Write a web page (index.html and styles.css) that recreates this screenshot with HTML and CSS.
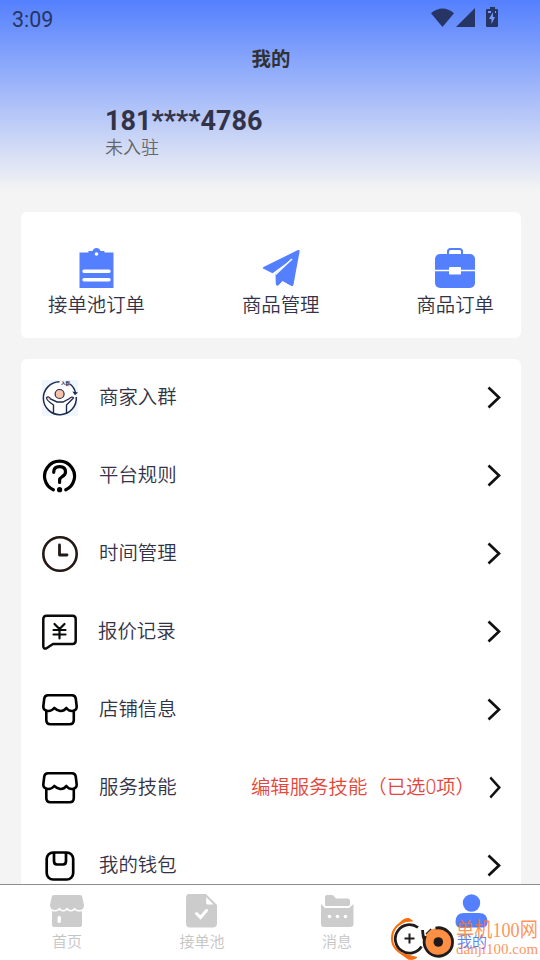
FILE: index.html
```html
<!DOCTYPE html>
<html lang="zh-CN">
<head>
<meta charset="utf-8">
<title>我的</title>
<link rel="stylesheet" href="styles.css">
</head>
<body>
<svg width="0" height="0" class="defs">
  <symbol id="chevron" viewBox="0 0 14 24" preserveAspectRatio="none"><path d="M1.500 1.500 12 11.500 1.500 21.500" fill="none" stroke="#111" stroke-width="2.700"/></symbol>
  <symbol id="shop" viewBox="0 0 36 36"><g fill="none" stroke="#000" stroke-width="2.600" stroke-linejoin="round"><path d="M6 3.300H30Q33.500 3.300 33.800 7L34.700 14.500Q34.700 18.300 30.500 19 27 19.300 24.300 16 22 19.300 18.200 19 15 18.500 12.300 16 9.500 19.300 5.800 19 1.300 18.300 1.300 14.500L2.200 7Q2.500 3.300 6 3.300Z"/><path d="M4.300 19V28Q4.300 32.300 8.600 32.300H27.500Q31.800 32.300 31.800 28V19"/></g></symbol>
</svg>
<header class="hero">
  <div class="status">
    <span class="clock">3:09</span>
    <svg width="68" height="22" viewBox="0 0 68 22" fill="#263563">
      <path d="M0 6.200Q11.500-3 23 6.200L11.500 20Z"/><path d="M44 1V20H25Z"/>
      <path d="M59 0h5v2h2q1 0 1 1v16q0 1-1 1H56q-1 0-1-1V3q0-1 1-1h3z"/>
      <path d="M57 4h3v2h-3zM64 4h1v2h-1zM62 5 58 12H60.500V17L64 10H61.800Z" fill="#7798ff"/>
    </svg>
  </div>
  <h1 class="title">我的</h1>
  <div class="phone">181****4786</div>
  <div class="state">未入驻</div>
</header>
<main class="content">
  <section class="card shortcuts">
    <a class="shortcut"><svg width="40" height="40" viewBox="-0.500 0 40 40"><path d="M3 4.500H12V3H16Q17 0 20 0T24 3H28V4.500H37V40H3Z" fill="#5480ff"/><circle cx="20" cy="6" r="1.800" fill="#fff"/><path d="M7.500 23.300H32.500M7.500 31.700H32.500" stroke="#fff" stroke-width="3.400" stroke-linecap="round"/></svg><span>接单池订单</span></a>
    <a class="shortcut"><svg width="40" height="40" viewBox="0 0 40 40" fill="#5480ff"><path d="M2 20.500Q1.500 19.500 3 18.800L37 2Q39 1.500 38.500 4L32.500 36.500Q32 38.800 30 37.800L21.500 33 18 36.800Q15.500 38.800 14.800 36L14.500 25.500 31 11 11.500 25.200Z"/><path d="M14.500 26.500 31 11" stroke="#fff" stroke-width="1.400"/></svg><span>商品管理</span></a>
    <a class="shortcut"><svg width="40" height="40" viewBox="0 0 40 40"><path d="M13 7V3.500Q13 1 15.500 1H24.500Q27 1 27 3.500V7" fill="none" stroke="#5480ff" stroke-width="2"/><rect y="6" width="40" height="34" rx="5" fill="#5480ff"/><path d="M0 22.500H40" stroke="#fff" stroke-width="1.500"/><rect x="14" y="19" width="12" height="7.500" rx="1" fill="#fff"/></svg><span>商品订单</span></a>
  </section>
  <section class="card menu">
    <a class="row"><svg class="ico" viewBox="0 0 36 36"><rect width="36" height="36" fill="#eff6fd"/><circle cx="18" cy="18" r="15.800" fill="#fff"/><path d="M17.500 1.700A16.500 16.500 0 1 0 34.300 17M28 4Q32.500 7.500 33.500 13" fill="none" stroke="#1c2b50" stroke-width="1.500"/><path d="M30.300 11.500 36 12.500 33 15.300Z" fill="#1c2b50"/><circle cx="17.600" cy="14" r="4.500" fill="#fac1a8" stroke="#1c2b50" stroke-width="1.200"/><path d="M4.500 17.500Q7 16 8.500 19L15 22H21L27.500 18.500Q30 16 31.500 18L24.500 25V33.500M4.500 17.500Q4 20 11.500 25V33.500" fill="none" stroke="#1c2b50" stroke-width="1.400"/><path d="M5 18l2-.5 1.500 3zM30.500 18l-2.500.5-1 2z" fill="#f5ab91"/><text class="mini" x="19" y="4.500">入群</text></svg><span class="label">商家入群</span><svg class="arrow"><use href="#chevron"/></svg></a>
    <a class="row"><svg class="ico" viewBox="0 0 36 36"><path d="M11.300 31.800A15 15 0 1 1 23.800 31.800" fill="none" stroke="#000" stroke-width="3.200" stroke-linecap="round"/><path d="M11.700 14.300Q11.700 8.700 17.600 8.700T23.500 14Q23.500 16.700 20.300 18.500 17.600 20.200 17.600 22V24.500" fill="none" stroke="#000" stroke-width="3.200" stroke-linecap="round"/><circle cx="17.600" cy="31.700" r="2.600"/></svg><span class="label">平台规则</span><svg class="arrow"><use href="#chevron"/></svg></a>
    <a class="row"><svg class="ico" viewBox="0 0 36 36" fill="none" stroke="#231815"><circle cx="18" cy="18" r="16.700" stroke-width="2.600"/><path d="M17.500 9V19H25" stroke-width="2.800" stroke-linecap="round" stroke-linejoin="round"/></svg><span class="label">时间管理</span><svg class="arrow"><use href="#chevron"/></svg></a>
    <a class="row quote"><svg class="ico" viewBox="0 0 36 36" fill="none" stroke="#090b0b" stroke-width="2.500" stroke-linecap="round" stroke-linejoin="round"><path d="M4.500 1.700H30.500Q33.700 1.700 33.700 5V26.800Q33.700 30 30.500 30H11L4.500 34.300Q1.300 35.500 1.300 32V5Q1.300 1.700 4.500 1.700Z"/><path d="M12.500 10 17.500 15 22.500 10M11.500 16H23.500M11.500 20.500H23.500M17.500 15V24.500" stroke-width="2.200"/></svg><span class="label">报价记录</span><svg class="arrow"><use href="#chevron"/></svg></a>
    <a class="row"><svg class="ico"><use href="#shop"/></svg><span class="label">店铺信息</span><svg class="arrow"><use href="#chevron"/></svg></a>
    <a class="row"><svg class="ico"><use href="#shop"/></svg><span class="label">服务技能</span><span class="hint">编辑服务技能（已选0项）</span><svg class="arrow narrow"><use href="#chevron"/></svg></a>
    <a class="row"><svg class="ico" viewBox="0 0 36 36" fill="none" stroke="#000" stroke-width="2.700"><rect x="4.700" y="4.500" width="26.500" height="27" rx="6.500"/><path d="M12 4.500V13Q12 16.500 15 16.500H21Q24 16.500 24 13V4.500"/></svg><span class="label">我的钱包</span><svg class="arrow"><use href="#chevron"/></svg></a>
  </section>
</main>
<nav class="tabs">
  <a class="tab"><svg width="36" height="36" viewBox="0 0 36 36" fill="#ccc"><path d="M5 2H31Q33 2 33.300 4L35 12Q35 17 30 17 27 17 25.500 14.500 22 19.500 18 14.500 14 19.500 10.500 14.500 9 17 6 17 1 17 1 12L2.700 4Q3 2 5 2Z"/><path d="M3 18Q7 19.500 10.500 17 14.500 20 18 17 21.500 20 25.500 17 29 19.500 33 18V32Q33 34 31 34H5Q3 34 3 32Z"/><rect x="8.500" y="23" width="3.500" height="7" rx="1.700" fill="#fff"/></svg><span>首页</span></a>
  <a class="tab"><svg width="36" height="36" viewBox="0 0 36 36"><path d="M5 1H22L33 12V30Q33 34.500 28.500 34.500H6Q2 34.500 2 30.500V5Q2 1 5 1Z" fill="#ccc"/><path d="M22.200 4V10Q22.200 11.500 24 11.500H29.500Z" fill="#fff"/><path d="M12.500 20.500 16.500 24.500 22.500 17.500" fill="none" stroke="#fff" stroke-width="3" stroke-linecap="round"/></svg><span>接单池</span></a>
  <a class="tab"><svg width="36" height="36" viewBox="0 0 36 36" fill="#ccc"><path d="M6 12V4Q6 2 8 2H13Q15 2 16 4.500L17 5.500H29Q31 5.500 31 8V11Q31 13 29 13H7Q6 13 6 12Z"/><path d="M2 11 6 15H30L34.500 11V31Q34.500 34 31 34H5Q2 34 2 31Z"/><g fill="#fff"><circle cx="10.500" cy="23.500" r="1.800"/><circle cx="18.500" cy="23.500" r="1.800"/><circle cx="26.500" cy="23.500" r="1.800"/></g></svg><span>消息</span></a>
  <a class="tab active"><svg width="36" height="36" viewBox="0 0 36 36" fill="#5480ff"><circle cx="17.500" cy="10" r="8.700"/><path d="M1.500 29Q1.500 20 10 20H25Q33.500 20 33.500 29 33.500 34.500 28 34.500H7Q1.500 34.500 1.500 29Z"/></svg><span>我的</span></a>
</nav>
<div class="watermark">
  <svg width="66" height="46" viewBox="0 0 66 46" fill="none">
    <path d="M18 5Q2 10 2 23.500 2 36 19 42" stroke="#ff6d0a" stroke-width="2"/><path d="M9 9Q13 3 19 3.500L22.500 6Q16 5.500 9 9ZM10 38 27 42.500Q23 45.500 18 44Z" fill="#ff6d0a" stroke="#ff6d0a"/>
    <circle cx="19.500" cy="23.500" r="14" fill="#fff"/>
    <path d="M28 12.500A14.200 14.200 0 1 0 31.500 31.500" stroke="#211b1c" stroke-width="2.800"/><path d="M19.500 18.500V28.500M14.500 23.500H24.500" stroke="#211b1c" stroke-width="2"/>
    <path d="M32.500 15Q32.500 22 35.500 28M36.500 19.500 41.500 14.500" stroke="#211b1c" stroke-width="2.800"/><circle cx="48.300" cy="27" r="14" fill="#ff9043"/><path d="M45.500 13.100A14.200 14.200 0 1 1 35.500 21" stroke="#211b1c" stroke-width="2.800"/><circle cx="48.300" cy="27" r="4.800" fill="#211b1c"/>
  </svg>
  <div class="brand"><div class="name">单机100网</div><div class="site">danji100.com</div></div>
</div>
</body>
</html>
```
FILE: styles.css
```css
* { box-sizing: border-box; }
body {
  margin: 0;
  width: 540px;
  height: 960px;
  overflow: hidden;
  display: flex;
  flex-direction: column;
  background: #f4f4f4;
  color: #333347;
  font-family: Roboto, "Noto Sans CJK SC", sans-serif;
}
svg { display: block; flex: none; }
.defs { position: absolute; }
.hero {
  height: 191px;
  flex: none;
  background: linear-gradient(#5480ff, #cbd6f6 73%, #f4f4f4);
}
.status {
  display: flex;
  justify-content: space-between;
  align-items: center;
  height: 36px;
  padding: 0 41px 0 12px;
}
.clock { font-size: 21.5px; color: #263563; padding-top: 2px; }
.title {
  margin: 8px 0 0;
  text-align: center;
  font-size: 19.4px;
  line-height: 31px;
  font-weight: 700;
  color: #303133;
  padding-left: 2px;
}
.phone {
  margin: 30px 0 0 105px;
  font-size: 27px;
  line-height: 32px;
  font-weight: 700;
}
.state {
  margin-left: 105px;
  font-size: 18px;
  line-height: 22px;
  color: #666;
  font-weight: 350;
}
.content {
  flex: 1;
  min-height: 0;
  overflow: hidden;
  padding: 21px 19px 0 21px;
}
.card { background: #fff; border-radius: 6px; }
.shortcuts {
  height: 126px;
  display: flex;
  justify-content: space-between;
  padding: 36px 27px 0;
}
.shortcut {
  display: flex;
  flex-direction: column;
  align-items: center;
  font-size: 19.4px;
  line-height: 36px;
  font-weight: 350;
}
.menu { margin-top: 21px; }
.row {
  height: 78px;
  display: flex;
  align-items: center;
  padding: 0 20px 0 21px;
}
.ico { width: 36px; height: 36px; }
.label {
  flex: 1;
  margin: -1px 0 0 21px;
  font-size: 19.4px;
  line-height: 30px;
  font-weight: 350;
}
.quote .label { margin-left: 20px; }
.arrow { width: 14px; height: 24px; }
.narrow { width: 12px; }
.hint {
  margin: -1px 14px 0 0;
  font-size: 19.4px;
  line-height: 30px;
  font-weight: 350;
  color: #e5463b;
}
.mini { font-size: 4.5px; font-weight: 700; fill: #1c2b50; }
.tabs {
  height: 76px;
  flex: none;
  display: grid;
  grid-template-columns: repeat(4, 1fr);
  background: #fff;
  border-top: 1px solid #8d8d8d;
}
.tab {
  display: flex;
  flex-direction: column;
  align-items: center;
  padding: 8px 1px 0 0;
  font-size: 15px;
  line-height: 27px;
  font-weight: 350;
  color: #c4c4c4;
}
.active { color: #5480ff; }
.watermark {
  position: absolute;
  left: 390px;
  top: 915px;
  display: flex;
}
.brand {
  color: rgba(255, 116, 38, .78);
  font-family: "Liberation Serif", "Noto Sans CJK SC", serif;
  white-space: nowrap;
}
.name { font-size: 18.2px; line-height: 30px; transform: scaleY(1.1); }
.site { font-size: 15px; line-height: 9px; }
```
